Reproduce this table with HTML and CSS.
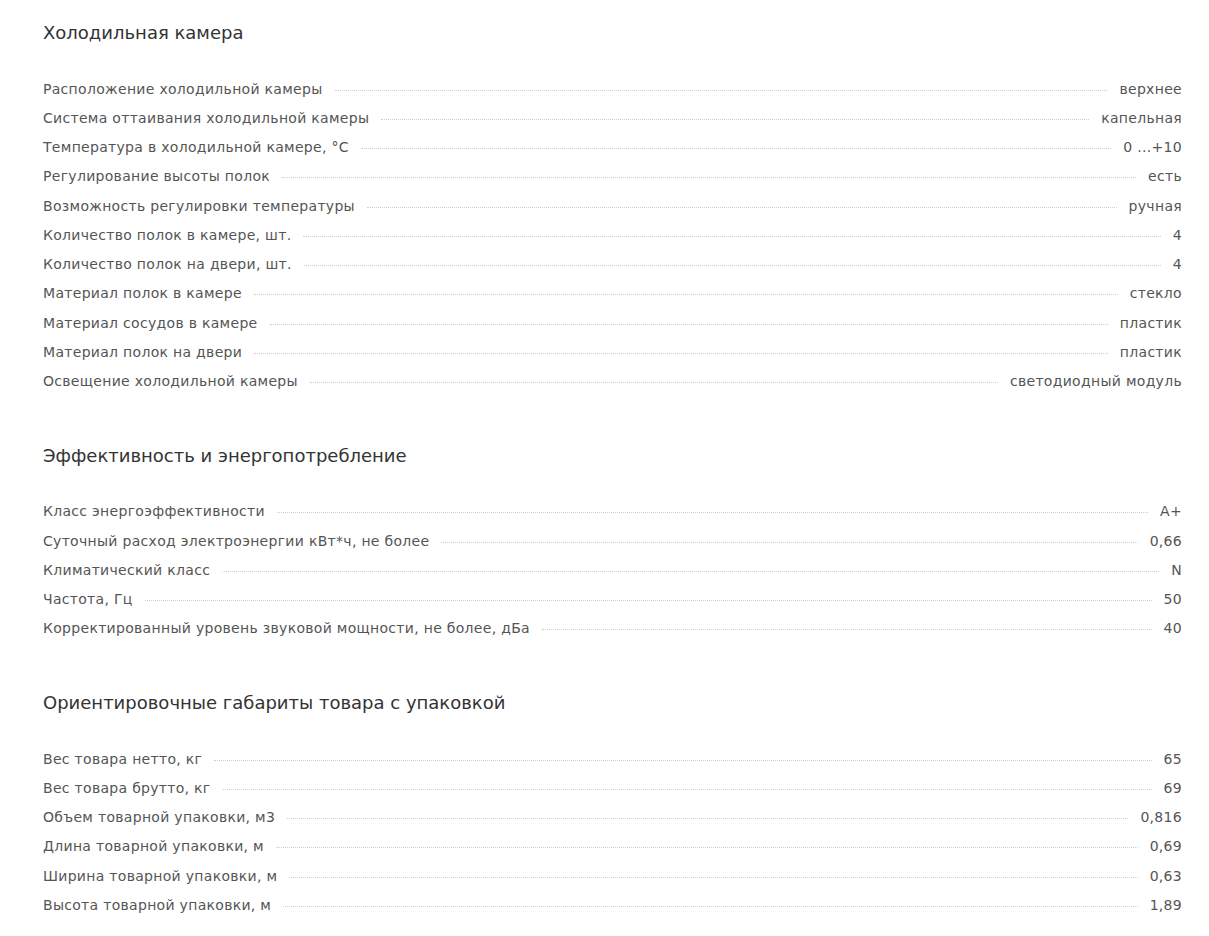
FILE: index.html
```html
<!DOCTYPE html>
<html lang="ru">
<head>
<meta charset="utf-8">
<title>Характеристики</title>
<link rel="stylesheet" href="styles.css">
</head>
<body>
<div class="specs">
  <section class="group">
    <h2 class="group-title">Холодильная камера</h2>
    <ul class="rows">
      <li class="row"><span class="label">Расположение холодильной камеры</span><span class="dots"></span><span class="value">верхнее</span></li>
      <li class="row"><span class="label">Система оттаивания холодильной камеры</span><span class="dots"></span><span class="value">капельная</span></li>
      <li class="row"><span class="label">Температура в холодильной камере, °C</span><span class="dots"></span><span class="value">0 ...+10</span></li>
      <li class="row"><span class="label">Регулирование высоты полок</span><span class="dots"></span><span class="value">есть</span></li>
      <li class="row"><span class="label">Возможность регулировки температуры</span><span class="dots"></span><span class="value">ручная</span></li>
      <li class="row"><span class="label">Количество полок в камере, шт.</span><span class="dots"></span><span class="value">4</span></li>
      <li class="row"><span class="label">Количество полок на двери, шт.</span><span class="dots"></span><span class="value">4</span></li>
      <li class="row"><span class="label">Материал полок в камере</span><span class="dots"></span><span class="value">стекло</span></li>
      <li class="row"><span class="label">Материал сосудов в камере</span><span class="dots"></span><span class="value">пластик</span></li>
      <li class="row"><span class="label">Материал полок на двери</span><span class="dots"></span><span class="value">пластик</span></li>
      <li class="row"><span class="label">Освещение холодильной камеры</span><span class="dots"></span><span class="value">светодиодный модуль</span></li>
    </ul>
  </section>
  <section class="group">
    <h2 class="group-title">Эффективность и энергопотребление</h2>
    <ul class="rows">
      <li class="row"><span class="label">Класс энергоэффективности</span><span class="dots"></span><span class="value">A+</span></li>
      <li class="row"><span class="label">Суточный расход электроэнергии кВт*ч, не более</span><span class="dots"></span><span class="value">0,66</span></li>
      <li class="row"><span class="label">Климатический класс</span><span class="dots"></span><span class="value">N</span></li>
      <li class="row"><span class="label">Частота, Гц</span><span class="dots"></span><span class="value">50</span></li>
      <li class="row"><span class="label">Корректированный уровень звуковой мощности, не более, дБа</span><span class="dots"></span><span class="value">40</span></li>
    </ul>
  </section>
  <section class="group">
    <h2 class="group-title">Ориентировочные габариты товара с упаковкой</h2>
    <ul class="rows">
      <li class="row"><span class="label">Вес товара нетто, кг</span><span class="dots"></span><span class="value">65</span></li>
      <li class="row"><span class="label">Вес товара брутто, кг</span><span class="dots"></span><span class="value">69</span></li>
      <li class="row"><span class="label">Объем товарной упаковки, м3</span><span class="dots"></span><span class="value">0,816</span></li>
      <li class="row"><span class="label">Длина товарной упаковки, м</span><span class="dots"></span><span class="value">0,69</span></li>
      <li class="row"><span class="label">Ширина товарной упаковки, м</span><span class="dots"></span><span class="value">0,63</span></li>
      <li class="row"><span class="label">Высота товарной упаковки, м</span><span class="dots"></span><span class="value">1,89</span></li>
    </ul>
  </section>
</div>
</body>
</html>
```
FILE: styles.css
```css
html, body {
  margin: 0;
  padding: 0;
  background: #ffffff;
}

body {
  font-family: "DejaVu Sans", "Noto Sans", sans-serif;
  color: #555555;
}

.specs {
  padding: 18px 27px 0 43px;
  display: flex;
  flex-direction: column;
  gap: 45px;
}

.group {
  display: flex;
  flex-direction: column;
  gap: 26px;
}

.group-title {
  margin: 0;
  font-size: 18px;
  font-weight: normal;
  line-height: 30px;
  color: #333333;
}

.rows {
  list-style: none;
  margin: 0;
  padding: 0;
}

.row {
  display: flex;
  align-items: center;
  height: 29.25px;
  font-size: 14px;
  letter-spacing: 0.3px;
}

.label,
.value {
  white-space: nowrap;
}

.dots {
  flex: 1;
  margin: 3px 12px 0 12px;
  border-bottom: 1px dotted #cfcfcf;
}
```
